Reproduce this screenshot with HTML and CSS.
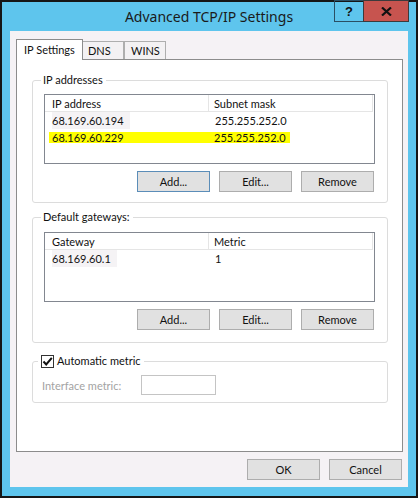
FILE: index.html
```html
<!DOCTYPE html>
<html lang="en">
  <head>
    <meta charset="UTF-8" />
    <title>Advanced TCP/IP Settings</title>
    <link rel="stylesheet" href="styles.css">
  </head>
  <body>
    <div class="window">
      <!-- Title bar -->
      <div class="titlebar">
        <div class="title">Advanced TCP/IP Settings</div>
        <div class="captions">
          <div class="cap help">?</div>
          <div class="cap close">
            <svg width="11" height="9" viewBox="0 0 11 9"><path d="M1 0.5 L10 8.5 M10 0.5 L1 8.5" stroke="#111" stroke-width="2.2" fill="none"/></svg>
          </div>
        </div>
      </div>

      <div class="client">
        <!-- Tabs -->
        <div class="tabs">
          <div class="tab active">IP Settings</div>
          <div class="tab dns">DNS</div>
          <div class="tab wins">WINS</div>
        </div>

        <div class="panel">
          <!-- IP addresses -->
          <fieldset class="group g1">
            <legend>IP addresses</legend>
            <div class="list">
              <div class="row head">
                <div class="col c1">IP address</div>
                <div class="col c2">Subnet mask</div>
              </div>
              <div class="row">
                <div class="col c1"><span class="faint">68.169.60.194</span></div>
                <div class="col c2">255.255.252.0</div>
              </div>
              <div class="row">
                <div class="hl"><span class="w1">68.169.60.229</span><span>255.255.252.0</span></div>
              </div>
            </div>
            <div class="buttons">
              <div class="btn default">Add...</div>
              <div class="btn">Edit...</div>
              <div class="btn">Remove</div>
            </div>
          </fieldset>

          <!-- Default gateways -->
          <fieldset class="group g2">
            <legend>Default gateways:</legend>
            <div class="list">
              <div class="row head">
                <div class="col c1">Gateway</div>
                <div class="col c2">Metric</div>
              </div>
              <div class="row">
                <div class="col c1"><span class="faint">68.169.60.1</span></div>
                <div class="col c2">1</div>
              </div>
            </div>
            <div class="buttons">
              <div class="btn">Add...</div>
              <div class="btn">Edit...</div>
              <div class="btn">Remove</div>
            </div>
          </fieldset>

          <!-- Metric -->
          <fieldset class="group g3">
            <legend>
              <span class="check">
                <svg width="11" height="11" viewBox="0 0 11 11"><path d="M1.5 5.5 L4.2 8.5 L9.8 1.8" stroke="#111" stroke-width="2" fill="none"/></svg>
              </span>
              Automatic metric
            </legend>
            <div class="metric">
              <span class="dim">Interface metric:</span>
              <div class="input"></div>
            </div>
          </fieldset>
        </div>

        <div class="footer">
          <div class="btn">OK</div>
          <div class="btn">Cancel</div>
        </div>
      </div>
    </div>
  </body>
</html>
```
FILE: styles.css
```css
* {
  box-sizing: border-box;
}

body {
  margin: 0;
  font-family: Lato, "Liberation Sans", sans-serif;
  font-size: 11px;
  color: #111;
}

.window {
  width: 418px;
  height: 498px;
  border: 2px solid #161616;
  background: #5ec5ed;
  display: flex;
  flex-direction: column;
}

/* Title bar */
.titlebar {
  height: 29px;
  position: relative;
  display: flex;
  justify-content: center;
  align-items: center;
}

.title {
  font-family: "Noto Sans", sans-serif;
  font-size: 14px;
  color: #1a1a1a;
  margin-top: -1px;
}

.captions {
  position: absolute;
  top: -2px;
  right: 7px;
  display: flex;
}

.cap {
  height: 22px;
  display: flex;
  align-items: center;
  justify-content: center;
}

.help {
  width: 29px;
  border: 1px solid #2a4f64;
  border-right: none;
  font-family: "Liberation Sans", sans-serif;
  font-weight: bold;
  font-size: 13px;
  color: #111;
}

.close {
  width: 46px;
  background: #c7544f;
  border: 1px solid #3c3a3c;
}

/* Client area */
.client {
  flex: 1;
  margin: 0 8px 9px 8px;
  background: #f5f2f5;
  padding: 8px 5px 0 6px;
}

.tabs {
  display: flex;
  align-items: flex-end;
  height: 20px;
}

.tab {
  height: 18px;
  border: 1px solid #aeaeae;
  border-bottom: none;
  background: #f3f1f3;
  padding: 2px 0 0 5px;
}

.tab.active {
  height: 21px;
  background: #fff;
  border-color: #8c8c8c;
  padding: 3px 0 0 7px;
  margin-bottom: -1px;
  position: relative;
  z-index: 1;
  width: 67px;
}

.dns {
  width: 41px;
  border-left: none;
}

.wins {
  width: 42px;
  padding-left: 6px;
}

.panel {
  height: 393px;
  background: #fff;
  border: 1px solid #8c8c8c;
  padding: 13px 14px 0 15px;
}

/* Group boxes */
.group {
  margin: 0;
  border: 1px solid #dcdcdc;
  border-radius: 3px;
  padding: 7px 12px 10px 11px;
  min-width: 0;
}

.group legend {
  padding: 0 3px 0 2px;
  margin-left: -3px;
  line-height: 14px;
  color: #111;
}

.g2 {
  margin-top: 7px;
  padding-top: 8px;
  padding-bottom: 12px;
}

.g3 {
  margin-top: 11px;
  padding: 7px 11px 7px 9px;
}

.g3 legend {
  display: flex;
  align-items: center;
  margin-left: -4px;
  padding: 0 3px 0 3px;
}

/* List view */
.list {
  height: 70px;
  border: 1px solid #828790;
  background: #fff;
}

.row {
  display: flex;
  height: 17px;
  align-items: center;
}

.row.head {
  height: 17px;
  border-bottom: 1px solid #e5e5e5;
  margin-right: 1px;
}

.col {
  padding-left: 7px;
}

.c1 {
  width: 164px;
}

.c2 {
  flex: 1;
  padding-left: 6px;
}

.head .c1 {
  border-right: 1px solid #e5e5e5;
  height: 100%;
  display: flex;
  align-items: center;
}

.head .c2 {
  border-right: 1px solid #e5e5e5;
  height: 100%;
  display: flex;
  align-items: center;
  padding-left: 5px;
}

.faint {
  background: #f5f3f5;
  padding: 2px 6px 2px 0;
}

.hl {
  margin-left: 4px;
  width: 241px;
  height: 11px;
  background: #ffff00;
  display: flex;
  align-items: center;
  padding-left: 3px;
  line-height: 11px;
}

.hl .w1 {
  width: 162px;
}

/* Buttons */
.buttons {
  display: flex;
  justify-content: flex-end;
  gap: 9px;
  margin-top: 7px;
  padding-right: 1px;
}

.btn {
  width: 73px;
  height: 21px;
  background: #e1e1e1;
  border: 1px solid #adadad;
  display: flex;
  align-items: center;
  justify-content: center;
  color: #111;
}

.btn.default {
  border-color: #5b8db8;
}

/* Metric */
.check {
  width: 13px;
  height: 13px;
  border: 1px solid #333;
  background: #fff;
  display: inline-flex;
  align-items: center;
  justify-content: center;
  margin-right: 3px;
}

.metric {
  display: flex;
  align-items: center;
}

.dim {
  color: #a3a3a3;
  width: 99px;
}

.input {
  width: 75px;
  height: 20px;
  border: 1px solid #c4c4c4;
  background: #fff;
}

/* Footer */
.footer {
  display: flex;
  justify-content: flex-end;
  gap: 9px;
  margin-top: 7px;
  padding-right: 1px;
}
```
